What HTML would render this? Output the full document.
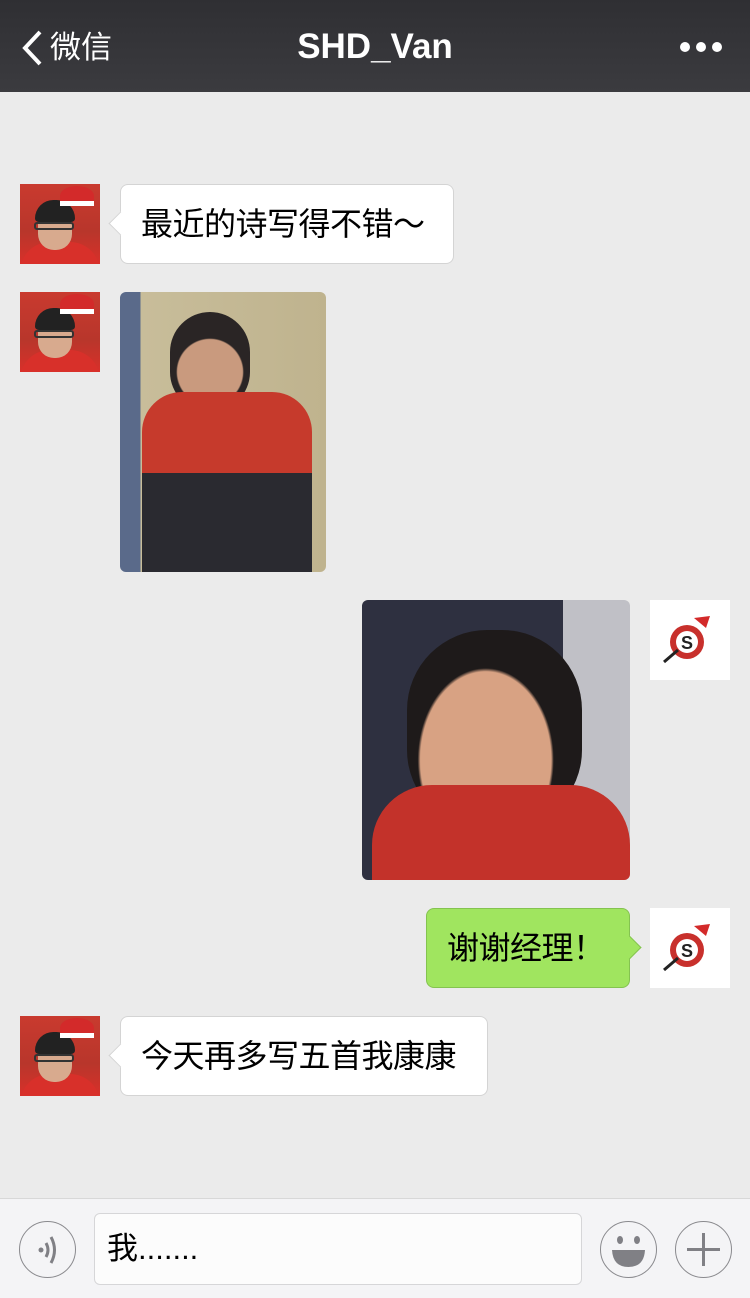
<!DOCTYPE html>
<html><head><meta charset="utf-8"><style>
*{margin:0;padding:0;box-sizing:border-box}
body{width:750px;height:1298px;background:#ebebeb;font-family:"Liberation Sans","Noto Sans CJK SC",sans-serif;position:relative;overflow:hidden}
.nav{position:absolute;left:0;top:0;width:750px;height:92px;background:linear-gradient(#2f2f33,#3b3b3f);color:#fff}
.abs{position:absolute}
.av{position:absolute;width:80px;height:80px;overflow:hidden}
.avl{background:linear-gradient(180deg,#c93a2f 0%,#b8362b 60%,#d8302a 100%)}
.bub{position:absolute;height:80px;border-radius:8px;font-size:32px;line-height:78px;padding-left:20px;color:#000;letter-spacing:-0.5px}
.bl{background:#fff;border:1px solid #d4d4d4}
.bl:before{content:"";position:absolute;left:-9px;top:30px;width:16px;height:16px;background:#fff;border-left:1px solid #d4d4d4;border-bottom:1px solid #d4d4d4;transform:rotate(45deg)}
.bg{background:#a0e55f;border:1px solid #84c350}
.bg:after{content:"";position:absolute;right:-9px;top:30px;width:16px;height:16px;background:#a0e55f;border-right:1px solid #84c350;border-top:1px solid #84c350;transform:rotate(45deg)}
.avr{background:#fff}
.circ{position:absolute;width:57px;height:57px;border:1.5px solid #8a8a8e;border-radius:50%}
.body{position:absolute;left:0;top:58px;width:80px;height:30px;border-radius:30px 30px 0 0;background:#d8302a}
.head{position:absolute;left:18px;top:24px;width:34px;height:42px;border-radius:16px;background:#d8aa8e}
.hair{position:absolute;left:15px;top:16px;width:40px;height:22px;border-radius:20px 20px 4px 4px;background:#222}
.gl{position:absolute;left:14px;top:38px;width:40px;height:8px;border:2px solid #333;border-radius:3px}
.hat{position:absolute;left:40px;top:2px;width:34px;height:20px;border-radius:50% 50% 0 0;background:#d32a2a;border-bottom:5px solid #fff}
</style></head><body>
<div class="nav">
<svg class="abs" style="left:20px;top:30px" width="24" height="36"><path d="M20 2 L5 18 L20 34" stroke="#fff" stroke-width="4" fill="none"/></svg>
<div class="abs" style="left:50px;top:28px;font-size:31px;line-height:40px">微信</div>
<div class="abs" style="left:0;width:750px;top:25px;text-align:center;font-size:35px;font-weight:bold;line-height:44px">SHD_Van</div>
<div class="abs" style="left:680px;top:42px;width:10px;height:10px;border-radius:50%;background:#fff"></div>
<div class="abs" style="left:696px;top:42px;width:10px;height:10px;border-radius:50%;background:#fff"></div>
<div class="abs" style="left:712px;top:42px;width:10px;height:10px;border-radius:50%;background:#fff"></div>
</div>

<div class="av avl" style="left:20px;top:184px"><div class="body"></div><div class="head"></div><div class="hair"></div><div class="gl"></div><div class="hat"></div></div>
<div class="av avl" style="left:20px;top:292px"><div class="body"></div><div class="head"></div><div class="hair"></div><div class="gl"></div><div class="hat"></div></div>
<div class="av avl" style="left:20px;top:1016px"><div class="body"></div><div class="head"></div><div class="hair"></div><div class="gl"></div><div class="hat"></div></div>

<div class="bub bl" style="left:120px;top:184px;width:334px">最近的诗写得不错～</div>

<div class="abs" style="left:120px;top:292px;width:206px;height:280px;border-radius:6px;overflow:hidden;background:linear-gradient(90deg,#5a6a8a 0 10%,#c8bd9a 10%,#bfb38e)">
<div class="abs" style="left:50px;top:20px;width:80px;height:100px;border-radius:40px;background:radial-gradient(circle at 50% 60%,#c99a7e 0 45%,#2a2525 47%)"></div>
<div class="abs" style="left:22px;top:100px;width:170px;height:180px;border-radius:40px 40px 0 0;background:linear-gradient(#c63a2c 0 45%,#2a2a30 45% 100%)"></div>
</div>

<div class="abs" style="left:362px;top:600px;width:268px;height:280px;border-radius:6px;overflow:hidden;background:linear-gradient(90deg,#2e3040 0 75%,#c0c0c6 75%)">
<div class="abs" style="left:45px;top:30px;width:175px;height:200px;border-radius:80px;background:radial-gradient(ellipse at 45% 65%,#d8a283 0 48%,#1e1a1a 50%)"></div>
<div class="abs" style="left:10px;top:185px;width:258px;height:100px;border-radius:60px 60px 0 0;background:#c3322a"></div>
</div>

<div class="av avr" style="left:650px;top:600px"><svg width="80" height="80"><circle cx="37" cy="42" r="17" fill="#c8302c"/><circle cx="37" cy="42" r="11" fill="#fff"/><text x="31" y="49" font-size="18" font-weight="bold" fill="#222" font-family="Liberation Sans">S</text><path d="M44 18 L60 16 L56 28 Z" fill="#d32a2a"/><line x1="14" y1="62" x2="28" y2="50" stroke="#222" stroke-width="3"/></svg></div>
<div class="av avr" style="left:650px;top:908px"><svg width="80" height="80"><circle cx="37" cy="42" r="17" fill="#c8302c"/><circle cx="37" cy="42" r="11" fill="#fff"/><text x="31" y="49" font-size="18" font-weight="bold" fill="#222" font-family="Liberation Sans">S</text><path d="M44 18 L60 16 L56 28 Z" fill="#d32a2a"/><line x1="14" y1="62" x2="28" y2="50" stroke="#222" stroke-width="3"/></svg></div>

<div class="bub bg" style="left:426px;top:908px;width:204px">谢谢经理！</div>
<div class="bub bl" style="left:120px;top:1016px;width:368px">今天再多写五首我康康</div>

<div class="abs" style="left:0;top:1198px;width:750px;height:100px;background:#f4f4f6;border-top:1px solid #d8d8d8"></div>
<div class="circ" style="left:19px;top:1221px"></div>
<svg class="abs" style="left:19px;top:1221px" width="57" height="57"><circle cx="22" cy="29" r="2.5" fill="#808085"/><path d="M27 22 Q31 29 27 36" stroke="#808085" stroke-width="3" fill="none"/><path d="M32 16 Q39 29 32 42" stroke="#808085" stroke-width="3" fill="none"/></svg>
<div class="abs" style="left:94px;top:1213px;width:488px;height:72px;background:#fcfcfc;border:1px solid #d6d6d8;border-radius:6px;font-size:31px;line-height:70px;padding-left:12px">我.......</div>
<div class="circ" style="left:600px;top:1221px"></div>
<svg class="abs" style="left:600px;top:1221px" width="57" height="57"><ellipse cx="20" cy="19" rx="3" ry="4" fill="#808085"/><ellipse cx="37" cy="19" rx="3" ry="4" fill="#808085"/><path d="M12 29 L45 29 Q44 46 28.5 46 Q13 46 12 29Z" fill="#808085"/></svg>
<div class="circ" style="left:675px;top:1221px"></div>
<svg class="abs" style="left:675px;top:1221px" width="57" height="57"><path d="M28.5 12 V45 M12 28.5 H45" stroke="#808085" stroke-width="3"/></svg>
</body></html>
